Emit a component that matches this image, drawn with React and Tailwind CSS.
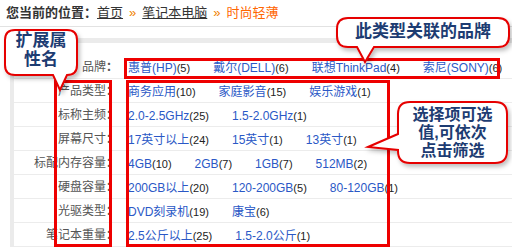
import React from "react";

const rows = [
  {
    label: "品牌",
    items: [
      ["惠普(HP)", 5],
      ["戴尔(DELL)", 6],
      ["联想ThinkPad", 4],
      ["索尼(SONY)", 6],
    ],
  },
  { label: "产品类型", items: [["商务应用", 10], ["家庭影音", 15], ["娱乐游戏", 1]] },
  { label: "标称主频", items: [["2.0-2.5GHz", 25], ["1.5-2.0GHz", 1]] },
  { label: "屏幕尺寸", items: [["17英寸以上", 24], ["15英寸", 1], ["13英寸", 1]] },
  { label: "标配内存容量", items: [["4GB", 10], ["2GB", 7], ["1GB", 7], ["512MB", 2]] },
  { label: "硬盘容量", items: [["200GB以上", 20], ["120-200GB", 5], ["80-120GB", 1]] },
  { label: "光驱类型", items: [["DVD刻录机", 19], ["康宝", 6]] },
  { label: "笔记本重量", items: [["2.5公斤以上", 25], ["1.5-2.0公斤", 1]] },
];

const Row = ({ label, items }) => (
  <div className="flex h-[24px] items-center border-b border-[#ececec]">
    <div className="w-[104px] shrink-0 text-right text-[12px] text-[#555]">
      {label}
      <span className="font-bold">：</span>
    </div>
    <div className="flex items-center gap-x-[23px] pl-[10px] whitespace-nowrap">
      {items.map(([name, n]) => (
        <span key={name}>
          <a href="#" className="text-[12px] text-[#2a58c6]">
            {name}
          </a>
          <span className="text-[11px] text-[#222]">({n})</span>
        </span>
      ))}
    </div>
  </div>
);

const Bubbles = () => (
  <svg
    className="absolute left-0 top-0 pointer-events-none"
    width="512"
    height="250"
    viewBox="0 0 512 250"
  >
    <defs>
      <filter id="sh" x="-20%" y="-20%" width="140%" height="160%">
        <feDropShadow dx="2" dy="3" stdDeviation="2" floodColor="#000" floodOpacity="0.25" />
      </filter>
    </defs>
    <g fill="#fff" stroke="#e60000" strokeWidth="2" filter="url(#sh)">
      <path d="M15,30 H67 Q77,30 77,40 V65 Q77,75 67,75 H67 L60,90 L53,75 H15 Q5,75 5,65 V40 Q5,30 15,30 Z" />
      <path d="M348,18 H498 Q509,18 509,29 V36 Q509,47 498,47 H374 L365,62 L357,47 H348 Q337,47 337,36 V29 Q337,18 348,18 Z" />
      <path d="M410,102 H495 Q507,102 507,114 V151 Q507,163 495,163 H410 Q398,163 398,151 V150 L368,147 L398,134 V114 Q398,102 410,102 Z" />
    </g>
  </svg>
);

export default function App() {
  return (
    <div
      className="relative h-[250px] w-[512px] overflow-hidden bg-white"
      style={{ fontFamily: '"Liberation Sans", "Noto Sans CJK SC", sans-serif' }}
    >
      <div className="flex h-[27px] items-center border-b border-[#e2e2e2] pl-[6px] text-[13px] text-[#333]">
        <span className="font-bold">您当前的位置：</span>
        <a href="#" className="underline text-[#333]">首页</a>
        <span className="mx-[6px] text-[#f08000]">»</span>
        <a href="#" className="underline text-[#333]">笔记本电脑</a>
        <span className="mx-[6px] text-[#f08000]">»</span>
        <span className="text-[#ff6600]">时尚轻薄</span>
      </div>

      <div className="ml-[10px] mt-[11px] border-l-4 border-t-[5px] border-[#ebebeb] pt-[12px]">
        {rows.map((r) => (
          <Row key={r.label} {...r} />
        ))}
      </div>

      <div className="absolute left-[124px] top-[58px] h-[21px] w-[376px] border-[3px] border-[#ee0000]" />
      <div className="absolute left-[54px] top-[80px] h-[167px] w-[58px] border-[3px] border-[#ee0000]" />
      <div className="absolute left-[126px] top-[80px] h-[167px] w-[264px] border-[3px] border-[#ee0000]" />

      <Bubbles />

      <div className="absolute left-[5px] top-[31px] w-[72px] text-center text-[17px] font-bold leading-[19px] text-[#1d3c72]">
        扩展属
        <br />
        性名
      </div>
      <div className="absolute left-[337px] top-[22px] w-[172px] text-center text-[17px] font-bold leading-[20px] text-[#1d3c72]">
        此类型关联的品牌
      </div>
      <div className="absolute left-[398px] top-[106px] w-[109px] text-center text-[16px] font-bold leading-[18px] text-[#1d3c72]">
        选择项可选
        <br />
        值,可依次
        <br />
        点击筛选
      </div>
    </div>
  );
}
